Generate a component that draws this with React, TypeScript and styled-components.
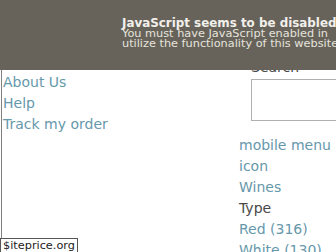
import React from "react";
import styled, { createGlobalStyle } from "styled-components";

const Global = createGlobalStyle`
  html, body { margin: 0; padding: 0; background: #fff; overflow: hidden; }
  body { font-family: "DejaVu Sans", Verdana, sans-serif; width: 336px; height: 252px; }
`;

const Page = styled.div`
  position: relative;
  width: 480px;
  height: 252px;
`;

const Notice = styled.div`
  position: absolute;
  top: 0;
  left: 0;
  right: 0;
  height: 70px;
  box-sizing: border-box;
  padding: 18px 0 0 122px;
  background: #67635b;
  color: #e6e3dc;
  z-index: 2;
`;

const NoticeTitle = styled.p`
  margin: 0;
  font-size: 11.9px;
  line-height: 10.5px;
  font-weight: bold;
  color: #f2f0eb;
  white-space: nowrap;
`;

const NoticeText = styled.p`
  margin: 0;
  font-size: 11.3px;
  line-height: 10.5px;
  white-space: nowrap;
`;

const Columns = styled.div`
  display: flex;
  margin-left: 1px;
  border-left: 1px solid #808080;
  height: 252px;
`;

const LeftCol = styled.nav`
  display: flex;
  flex-direction: column;
  width: 236px;
  padding: 72px 0 0 1px;
`;

const RightCol = styled.div`
  display: flex;
  flex-direction: column;
  padding-top: 57px;
`;

const Link = styled.a`
  font-size: 14px;
  line-height: 21px;
  color: #6698ab;
  text-decoration: none;
  white-space: nowrap;
`;

const Heading = styled.span`
  font-size: 14px;
  line-height: 21px;
  color: #474747;
`;

const SearchBlock = styled.div`
  display: flex;
  flex-direction: column;
  padding-left: 12px;
  margin-bottom: 14px;
`;

const SearchLabel = styled.label`
  font-size: 14px;
  line-height: 21px;
  color: #474747;
`;

const SearchInput = styled.input`
  margin-top: 1px;
  width: 160px;
  height: 42px;
  box-sizing: border-box;
  border: 1px solid #b0b0b0;
  padding: 0;
  background: #fff;
`;

const Watermark = styled.div`
  position: absolute;
  left: 0;
  bottom: 0;
  z-index: 3;
  padding: 0 2px;
  height: 14px;
  box-sizing: border-box;
  border: 1px solid #555;
  border-bottom: none;
  background: #fff;
  color: #222;
  font-size: 11.3px;
  line-height: 14px;
`;

export default function App() {
  return (
    <>
      <Global />
      <Page>
        <Notice>
          <NoticeTitle>JavaScript seems to be disabled</NoticeTitle>
          <NoticeText>You must have JavaScript enabled in</NoticeText>
          <NoticeText>utilize the functionality of this website</NoticeText>
        </Notice>
        <Columns>
          <LeftCol>
            <Link href="#">About Us</Link>
            <Link href="#">Help</Link>
            <Link href="#">Track my order</Link>
          </LeftCol>
          <RightCol>
            <SearchBlock>
              <SearchLabel>Search</SearchLabel>
              <SearchInput type="text" />
            </SearchBlock>
            <Link href="#">mobile menu</Link>
            <Link href="#">icon</Link>
            <Link href="#">Wines</Link>
            <Heading>Type</Heading>
            <Link href="#">Red (316)</Link>
            <Link href="#">White (130)</Link>
          </RightCol>
        </Columns>
        <Watermark>$iteprice.org</Watermark>
      </Page>
    </>
  );
}
